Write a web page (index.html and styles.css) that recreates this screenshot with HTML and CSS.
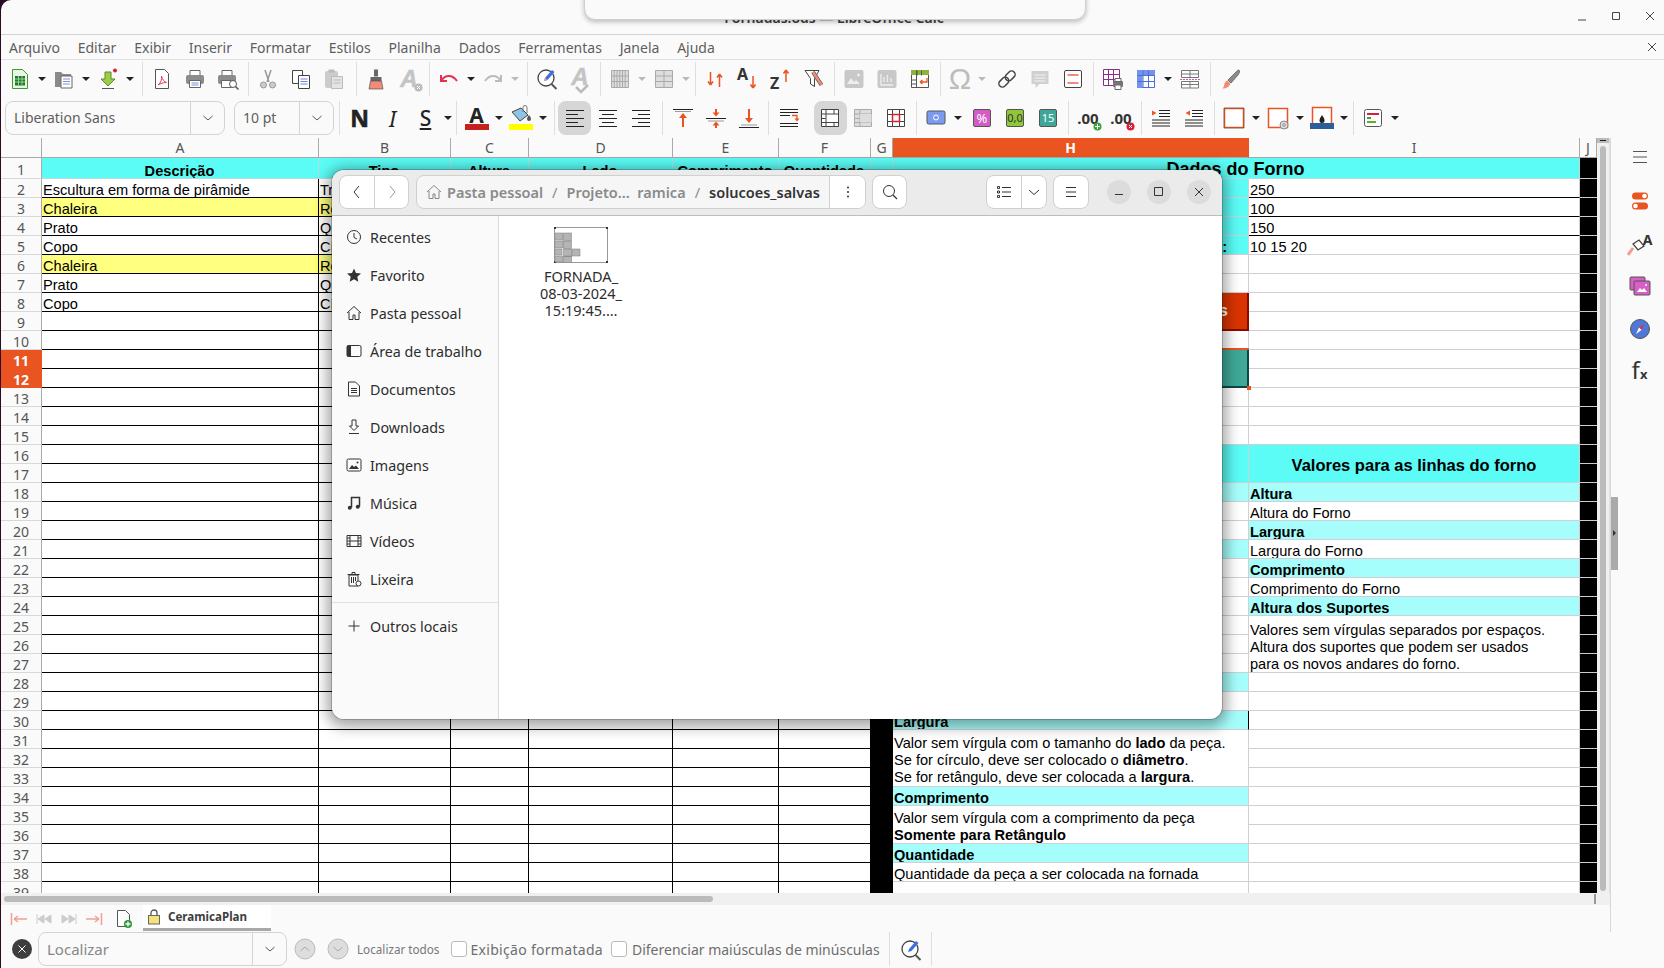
FILE: index.html
```html
<!DOCTYPE html>
<html>
<head>
    <title>Fornadas.ods - LibreOffice Calc</title>
    <meta name="viewport" content="width=device-width, initial-scale=1.0">
    <link rel="stylesheet" href="styles.css">
</head>
<body>
<div class="app">
    <div class="notice"><span>Aguarde enquanto o programa processa os dados do arquivo</span></div>

    <div class="titlebar">
        <span class="title">Fornadas.ods — LibreOffice Calc</span>
        <div class="wm">
            <svg width="14" height="14" viewBox="0 0 14 14"><path d="M3 11h8" stroke="#444" fill="none"/></svg>
            <svg width="14" height="14" viewBox="0 0 14 14"><path d="M3.500 3.500h7v7h-7z" stroke="#444" fill="none"/></svg>
            <svg width="14" height="14" viewBox="0 0 14 14"><path d="M3 3l8 8M11 3l-8 8" stroke="#444" fill="none"/></svg>
        </div>
    </div>

    <div class="menubar">
        <span>Arquivo</span><span>Editar</span><span>Exibir</span><span>Inserir</span><span>Formatar</span><span>Estilos</span><span>Planilha</span><span>Dados</span><span>Ferramentas</span><span>Janela</span><span>Ajuda</span>
        <svg class="menu-x" width="14" height="14" viewBox="0 0 14 14"><path d="M3 3l8 8M11 3l-8 8" stroke="#444" fill="none"/></svg>
    </div>

    <div class="toolbar tb1">
        <i class="ic"><svg width="24" height="24" viewBox="0 0 24 24"><path d="M4.500 2.500h10l5 5v14h-15z" fill="#eaf6e4" stroke="#3c9a30"/><path d="M7 9h10v9.500H7z" fill="#1d7d26"/><path d="M7 12h10M7 15h10M10.500 9v9M14 9v9" stroke="#cfe8c8" stroke-width=".7"/></svg></i>
        <i class="ar"></i>
        <i class="ic"><svg width="24" height="24" viewBox="0 0 24 24"><path d="M3 5h6l2 2h8v13H3z" fill="#8a8a8a"/><path d="M9 9h11v12H9z" fill="#fff" stroke="#666"/><path d="M11 12h7M11 14.500h7M11 17h7" stroke="#7f93d8"/></svg></i>
        <i class="ar"></i>
        <i class="ic"><svg width="24" height="24" viewBox="0 0 24 24"><path d="M9 5h6v7h4l-7 7-7-7h4z" fill="#9ccc4a" stroke="#5c8a24"/><path d="M6 21.500h12" stroke="#555"/><circle cx="19" cy="3.500" r="2" fill="#d0203a"/></svg></i>
        <i class="ar w"></i>
        <i class="sep"></i>
        <i class="ic"><svg width="24" height="24" viewBox="0 0 24 24"><path d="M5.500 2.500h9l4 4v15h-13z" fill="#fff" stroke="#555"/><path d="M8 18c3-2 4-6 3.500-9 1 4 3 6 5 6.500-3 0-6 1-8.500 2.500z" fill="none" stroke="#e2405a"/></svg></i>
        <i class="ic"><svg width="24" height="24" viewBox="0 0 24 24"><path d="M7 3.500h10v5H7z" fill="#fff" stroke="#666"/><rect x="3" y="8" width="18" height="9" rx="2" fill="#8c8c8c"/><path d="M6.500 13.500h11v7h-11z" fill="#fff" stroke="#666"/><path d="M8.500 16h7M8.500 18h7" stroke="#7f93d8"/></svg></i>
        <i class="ic"><svg width="24" height="24" viewBox="0 0 24 24"><path d="M6 3.500h10v5H6z" fill="#fff" stroke="#666"/><rect x="2" y="8" width="18" height="9" rx="2" fill="#8c8c8c"/><path d="M5.500 13.500h10v7h-10z" fill="#fff" stroke="#666"/><circle cx="17" cy="17" r="3.500" fill="#fff" stroke="#555"/><path d="M19.500 19.500l3 3" stroke="#555" stroke-width="1.500"/></svg></i>
        <i class="sep"></i>
        <i class="ic off"><svg width="24" height="24" viewBox="0 0 24 24"><path d="M9 3l4 12M15 3l-4 12" stroke="#999" stroke-width="1.500" fill="none"/><circle cx="7.500" cy="18" r="3" fill="#ccc" stroke="#999"/><circle cx="16.500" cy="18" r="3" fill="#ccc" stroke="#999"/></svg></i>
        <i class="ic"><svg width="24" height="24" viewBox="0 0 24 24"><path d="M3.500 3.500h10v13h-10z" fill="#fff" stroke="#444"/><path d="M9.500 8.500h11v13h-11z" fill="#fff" stroke="#444"/><path d="M11.500 12h7M11.500 14.500h7M11.500 17h7" stroke="#6d86d8"/></svg></i>
        <i class="ic off"><svg width="24" height="24" viewBox="0 0 24 24"><rect x="3" y="4" width="13" height="17" rx="2" fill="#ccc"/><path d="M6.500 2.500h6v3h-6z" fill="#bbb"/><path d="M9.500 9.500h11v12h-11z" fill="#e4e4e4" stroke="#bbb"/><path d="M11.500 13h7M11.500 16h7" stroke="#bbb"/></svg></i>
        <i class="sep m2"></i>
        <i class="ic"><svg width="24" height="24" viewBox="0 0 24 24"><path d="M10 2.500h4v7h-4z" fill="#666"/><path d="M6.500 10h11v4h-11z" fill="#666"/><path d="M6.500 14h11l1.500 8h-14z" fill="#f28b78" stroke="#555" stroke-width=".7"/></svg></i>
        <i class="ic off"><span class="gly-a">A</span><svg class="badge" width="9" height="9" viewBox="0 0 9 9"><circle cx="4.500" cy="4.500" r="4" fill="#bbb"/><path d="M3 3l3 3M6 3l-3 3" stroke="#fff"/></svg></i>
        <i class="sep"></i>
        <i class="ic"><svg width="24" height="24" viewBox="0 0 24 24"><path d="M4 8v6h6M4.500 13.500C8 8 15 7 20 14" fill="none" stroke="#e4304f" stroke-width="2"/></svg></i>
        <i class="ar"></i>
        <i class="ic off"><svg width="24" height="24" viewBox="0 0 24 24"><path d="M20 8v6h-6M19.500 13.500C16 8 9 7 4 14" fill="none" stroke="#bbb" stroke-width="2"/></svg></i>
        <i class="ar off w"></i>
        <i class="sep"></i>
        <i class="ic"><svg width="24" height="24" viewBox="0 0 24 24"><circle cx="11" cy="11" r="8" fill="#fff" stroke="#444" stroke-width="1.300"/><path d="M16.500 17l5 5" stroke="#555" stroke-width="2"/><path d="M9 14l1-3 7-8 2.500 2-7 8z" fill="#3d6fe0"/><path d="M9 14l1-3 2.500 2z" fill="#f0a070"/></svg></i>
        <i class="ic off"><span class="gly-a up">A</span><svg class="check" width="16" height="10" viewBox="0 0 16 10"><path d="M2 3l5 5 7-7" fill="none" stroke="#bbb" stroke-width="2.500"/></svg></i>
        <i class="sep"></i>
        <i class="ic"><svg width="24" height="24" viewBox="0 0 24 24"><path d="M3.500 3.500h17v17h-17zM3.500 9h17M3.500 14.500h17M9 3.500v17M14.500 3.500v17M6.200 3.500v17M11.800 3.500v17M17.200 3.500v17" fill="#ddd" stroke="#aaa"/></svg></i>
        <i class="ar off"></i>
        <i class="ic"><svg width="24" height="24" viewBox="0 0 24 24"><path d="M3.500 3.500h17v17h-17zM3.500 9h17M3.500 14.500h17M12 3.500v17" fill="#ddd" stroke="#aaa"/></svg></i>
        <i class="ar off"></i>
        <i class="sep"></i>
        <i class="ic"><svg width="24" height="24" viewBox="0 0 24 24"><path d="M7.500 5v13M7.500 18l-2.500-3.500M7.500 18l2.500-3.500M16.500 20V7M16.500 7l-2.500 3.500M16.500 7l2.500 3.500" fill="none" stroke="#e95420" stroke-width="1.500"/></svg></i>
        <i class="ic"><svg width="24" height="24" viewBox="0 0 24 24"><text x="1" y="13" class="st">A</text><path d="M17 9v12M17 21l-2.500-3.500M17 21l2.500-3.500" fill="none" stroke="#e95420" stroke-width="1.500"/></svg></i>
        <i class="ic"><svg width="24" height="24" viewBox="0 0 24 24"><text x="1" y="22" class="st">Z</text><path d="M17 15V3M17 3l-2.500 3.500M17 3l2.500 3.500" fill="none" stroke="#e95420" stroke-width="1.500"/></svg></i>
        <i class="ic"><svg width="24" height="24" viewBox="0 0 24 24"><path d="M3 3.500h14l-4.500 8v8l-4-2.500v-5.500z" fill="#fff" stroke="#444"/><path d="M11 5l8.500 13" stroke="#555" stroke-width="4"/><path d="M11 5l8.500 13" stroke="#f08c78" stroke-width="2.500"/></svg></i>
        <i class="sep"></i>
        <i class="ic"><svg width="24" height="24" viewBox="0 0 24 24"><rect x="2.500" y="3" width="19" height="18" rx="2" fill="#c8c8c8"/><path d="M5 17l4-6 3 4 2-2 4 4z" fill="#eee"/><circle cx="16.500" cy="8" r="1.500" fill="#eee"/></svg></i>
        <i class="ic"><svg width="24" height="24" viewBox="0 0 24 24"><rect x="2.500" y="3" width="19" height="18" rx="2" fill="#c8c8c8"/><path d="M6 7v11h12M9 15v-5M12.500 15v-7M16 15v-4" fill="none" stroke="#eee" stroke-width="1.300"/></svg></i>
        <i class="ic"><svg width="24" height="24" viewBox="0 0 24 24"><path d="M3.500 3.500h17v17h-17z" fill="#fff" stroke="#555"/><path d="M3 3h18v5H3z" fill="#8eb33b"/><path d="M8.500 3.500v17M3.500 13h5M3.500 17h5M9 3.500v5M13.500 3.500v5" stroke="#555" fill="none"/><path d="M19 11v4h-7M12 15l2.500-2M12 15l2.500 2" stroke="#e95420" stroke-width="1.300" fill="none"/></svg></i>
        <i class="sep"></i>
        <i class="ic off"><span class="gly-o">Ω</span></i>
        <i class="ar off w"></i>
        <i class="ic"><svg width="24" height="24" viewBox="0 0 24 24"><g transform="rotate(-45 12 12)" fill="none" stroke="#444" stroke-width="1.500"><rect x="2" y="8.500" width="11" height="7" rx="3.500"/><rect x="11" y="8.500" width="11" height="7" rx="3.500"/></g></svg></i>
        <i class="ic off"><svg width="24" height="24" viewBox="0 0 24 24"><path d="M3.500 4h17v13h-9l-4 4v-4h-4z" fill="#d0d0d0"/><path d="M6.500 8h11M6.500 11h11M6.500 14h11" stroke="#f5f5f5"/></svg></i>
        <i class="ic"><svg width="24" height="24" viewBox="0 0 24 24"><rect x="3.500" y="3.500" width="17" height="17" rx="1.500" fill="#fff" stroke="#444"/><path d="M6.500 8h11M6.500 16h11" stroke="#f08c78" stroke-width="2"/></svg></i>
        <i class="sep"></i>
        <i class="ic"><svg width="24" height="24" viewBox="0 0 24 24"><path d="M2.500 2.500h16v16h-16zM2.500 7.500h16M2.500 12.500h16M7.500 2.500v16M12.500 2.500v16" fill="#fff" stroke="#8c2d8c"/><rect x="12" y="14" width="10" height="6" rx="1" fill="#777"/><path d="M14 11.500h6v3h-6zM14 18h6v4.500h-6z" fill="#fff" stroke="#666"/></svg></i>
        <i class="ic"><svg width="24" height="24" viewBox="0 0 24 24"><path d="M3.500 3.500h17v17h-17z" fill="#fff" stroke="#4a6ee0"/><path d="M3 3h18v5.500H3zM3 3h5.500v18H3z" fill="#7592ea"/><path d="M3.500 8.500h17M3.500 14.500h17M9 3.500v17M14.500 3.500v17" stroke="#4a6ee0" fill="none"/></svg></i>
        <i class="ar"></i>
        <i class="ic"><svg width="24" height="24" viewBox="0 0 24 24"><path d="M3.500 3.500h17v7h-17zM3.500 7h17M12 3.500v7M3.500 14.500h17v6.500h-17zM3.500 17.500h17M12 14.500V21" fill="#fff" stroke="#777"/><path d="M2 12.500h20" stroke="#c45cb8" stroke-dasharray="2 1"/></svg></i>
        <i class="sep"></i>
        <i class="ic"><svg width="24" height="24" viewBox="0 0 24 24"><path d="M21 3c1 1 .5 3-1 5l-7 8-3-3 8-8c1-1 2-2.500 3-2z" fill="#8a8a8a" stroke="#777"/><path d="M9.500 13.500l3 3c-1 3-4 5-8 5 1.500-1.500 1.500-3 2-5 .5-1.500 2-3 3-3z" fill="#f08c78"/></svg></i>
    </div>

    <div class="toolbar tb2">
        <div class="combo font-box"><span class="combo-txt">Liberation Sans</span><span class="combo-btn"><svg width="12" height="12" viewBox="0 0 12 12"><path d="M1.500 4l4.500 4 4.500-4" fill="none" stroke="#555"/></svg></span></div>
        <div class="combo size-box"><span class="combo-txt">10 pt</span><span class="combo-btn"><svg width="12" height="12" viewBox="0 0 12 12"><path d="M1.500 4l4.500 4 4.500-4" fill="none" stroke="#555"/></svg></span></div>
        <i class="sep after-box"></i>
        <i class="ic"><span class="g-n">N</span></i>
        <i class="ic"><span class="g-i">I</span></i>
        <i class="ic"><span class="g-s">S</span></i>
        <i class="ar"></i>
        <i class="sep"></i>
        <i class="ic col"><span class="g-s plain">A</span><b class="swatch red"></b></i>
        <i class="ar"></i>
        <i class="ic col"><svg width="24" height="19" viewBox="0 0 24 19"><path d="M3 7l9-4 7 7-8 6z" fill="#8fc4e8" stroke="#444"/><path d="M14 7V2.500a2 2 0 0 1 4 0V8" fill="none" stroke="#777"/><path d="M20 10c1.500 2 2 3 2 4a2 2 0 0 1-4 0c0-1 .5-2 2-4z" fill="#555"/></svg><b class="swatch yellow"></b></i>
        <i class="ar"></i>
        <i class="sep m1"></i>
        <i class="ic act"><svg width="24" height="24" viewBox="0 0 24 24"><path d="M3 4.500h18M3 8.500h12M3 12.500h18M3 16.500h12M3 20.500h18" stroke="#222"/></svg></i>
        <i class="ic"><svg width="24" height="24" viewBox="0 0 24 24"><path d="M3 4.500h18M6 8.500h12M3 12.500h18M6 16.500h12M3 20.500h18" stroke="#222"/></svg></i>
        <i class="ic"><svg width="24" height="24" viewBox="0 0 24 24"><path d="M3 4.500h18M9 8.500h12M3 12.500h18M9 16.500h12M3 20.500h18" stroke="#222"/></svg></i>
        <i class="sep m2"></i>
        <i class="ic"><svg width="24" height="24" viewBox="0 0 24 24"><path d="M2 3.500h20" stroke="#222"/><path d="M12 21V10" stroke="#e95420" stroke-width="2"/><path d="M12 7l-4 5h8z" fill="#e95420"/><path d="M4 5.500h16" stroke="#999"/></svg></i>
        <i class="ic"><svg width="24" height="24" viewBox="0 0 24 24"><path d="M2 12.500h20" stroke="#222"/><path d="M4 15h16" stroke="#999"/><path d="M12 3v4" stroke="#e95420" stroke-width="2"/><path d="M12 10.500l-3.500-4h7z" fill="#e95420"/><path d="M12 22v-3" stroke="#e95420" stroke-width="2"/><path d="M12 15.500l-3.500 4h7z" fill="#e95420"/></svg></i>
        <i class="ic"><svg width="24" height="24" viewBox="0 0 24 24"><path d="M2 21.500h20" stroke="#222"/><path d="M4 19h16" stroke="#999"/><path d="M12 3v10" stroke="#e95420" stroke-width="2"/><path d="M12 17l-4-5h8z" fill="#e95420"/></svg></i>
        <i class="sep"></i>
        <i class="ic"><svg width="24" height="24" viewBox="0 0 24 24"><path d="M3 3.500h18M3 6.500h18M3 9.500h10M3 17.500h18M3 20.500h18" stroke="#222"/><path d="M15 9.500h5v4" fill="none" stroke="#e95420" stroke-width="1.300"/><path d="M17.500 12.500h5l-2.500 3z" fill="#e95420"/></svg></i>
        <i class="ic act sp9"><svg width="24" height="24" viewBox="0 0 24 24"><path d="M3.500 3.500h17v17h-17z" fill="#fff" stroke="#444"/><path d="M3.500 8h17M3.500 12.500h4M3.500 16.500h17M8 3.500v17M16 3.500v4.500M16 16.500v4" stroke="#444" fill="none"/></svg></i>
        <i class="ic off"><svg width="24" height="24" viewBox="0 0 24 24"><path d="M3.500 3.500h17v17h-17z" fill="#ddd" stroke="#aaa"/><path d="M3.500 8h17M3.500 12.500h17M3.500 16.500h17M9 3.500v17" stroke="#aaa" fill="none"/><path d="M9 8h11.500v8.500H9z" fill="#ddd"/></svg></i>
        <i class="ic"><svg width="24" height="24" viewBox="0 0 24 24"><path d="M3.500 3.500h17v17h-17z" fill="#fff" stroke="#444"/><path d="M3.500 8.500h17M3.500 15.500h17M8.500 3.500v17M15.500 3.500v17" stroke="#444" fill="none"/><path d="M8.500 8.500h7v7h-7z" fill="#fff" stroke="#d8203a" stroke-width="1.500"/></svg></i>
        <i class="sep"></i>
        <i class="ic"><svg width="24" height="24" viewBox="0 0 24 24"><rect x="3" y="5" width="18" height="13" rx="1.500" fill="#7a9bf0" stroke="#555"/><circle cx="12" cy="11.500" r="2.500" fill="none" stroke="#fff"/></svg></i>
        <i class="ar w2"></i>
        <i class="ic"><span class="tag pink">%</span></i>
        <i class="ic"><span class="tag green">0,0</span></i>
        <i class="ic"><span class="tag teal">15</span></i>
        <i class="sep"></i>
        <i class="ic"><span class="dec">.00</span><svg class="badge" width="9" height="9" viewBox="0 0 9 9"><circle cx="4.500" cy="4.500" r="4" fill="#3ca33c"/><path d="M4.500 2v5M2 4.500h5" stroke="#fff"/></svg></i>
        <i class="ic"><span class="dec">.00</span><svg class="badge" width="9" height="9" viewBox="0 0 9 9"><circle cx="4.500" cy="4.500" r="4" fill="#d8203a"/><path d="M3 3l3 3M6 3l-3 3" stroke="#fff"/></svg></i>
        <i class="sep"></i>
        <i class="ic"><svg width="24" height="24" viewBox="0 0 24 24"><path d="M10 4.500h11M10 7.500h11M10 10.500h11M3 14h18M3 17h18M3 20h18" stroke="#222"/><path d="M3 4.500v5l4.500-2.500z" fill="#e95420"/></svg></i>
        <i class="ic"><svg width="24" height="24" viewBox="0 0 24 24"><path d="M10 4.500h11M10 7.500h11M10 10.500h11M3 14h18M3 17h18M3 20h18" stroke="#222"/><path d="M8 4.500v5L3.500 7z" fill="#e95420"/></svg></i>
        <i class="sep"></i>
        <i class="ic"><svg width="24" height="24" viewBox="0 0 24 24"><path d="M2.500 2.500h19v19h-19z" fill="#fff" stroke="#e95420" stroke-width="1.500"/><path d="M2 2h20v20H2z" fill="none" stroke="#444" stroke-width=".5"/></svg></i>
        <i class="ar"></i>
        <i class="ic"><svg width="24" height="24" viewBox="0 0 24 24"><path d="M2.500 2.500h19v19h-19z" fill="#fff" stroke="#e95420" stroke-width="1.500"/><circle cx="18" cy="19" r="4" fill="#ddd" stroke="#888"/><circle cx="18" cy="19" r="1.300" fill="#fff" stroke="#888"/></svg></i>
        <i class="ar"></i>
        <i class="ic"><svg width="24" height="24" viewBox="0 0 24 24"><path d="M2.500 1.500h19v18h-19z" fill="#fff" stroke="#e95420" stroke-width="1.500"/><path d="M12 9c2 3 2.500 4 2.500 5.500a2.500 2.500 0 0 1-5 0C9.500 13 10 12 12 9z" fill="#222"/><path d="M0 17h24v6H0z" fill="#2b5f9b"/></svg></i>
        <i class="ar"></i>
        <i class="sep"></i>
        <i class="ic"><svg width="24" height="24" viewBox="0 0 24 24"><rect x="3.500" y="3.500" width="17" height="17" rx="2" fill="#fff" stroke="#555"/><path d="M6 8h12" stroke="#d8203a" stroke-width="2"/><path d="M6 12h4" stroke="#3ca33c" stroke-width="2"/><path d="M6 16h9" stroke="#5fb320" stroke-width="2"/></svg></i>
        <i class="ar"></i>
    </div>

    <div class="work">
        <div class="left">
            <div class="sheet-row">
                <div class="sheet">
                    <table class="grid">
                        <colgroup>
                            <col class="c-rh"><col class="c-a"><col class="c-b"><col class="c-c"><col class="c-d"><col class="c-e"><col class="c-f"><col class="c-g"><col class="c-h"><col class="c-i"><col class="c-j">
                        </colgroup>
                        <thead>
                            <tr class="colhead"><th></th><th>A</th><th>B</th><th>C</th><th>D</th><th>E</th><th>F</th><th>G</th><th class="sel">H</th><th>I</th><th>J</th></tr>
                        </thead>
                        <tbody>
                            <tr class="r1"><th>1</th><td class="hd">Descrição</td><td class="hd">Tipo</td><td class="hd">Altura</td><td class="hd">Lado</td><td class="hd">Comprimento</td><td class="hd">Quantidade</td><td class="hd"></td><td class="hd ttl" colspan="2">Dados do Forno</td><td class="j"></td></tr>
                            <tr><th>2</th><td>Escultura em forma de pirâmide</td><td>Triângulo</td><td>30</td><td>20</td><td></td><td>1</td><td class="bk"></td><td class="cy">Altura:</td><td class="i bb">250</td><td class="j"></td></tr>
                            <tr class="yel"><th>3</th><td>Chaleira</td><td>Retângulo</td><td>15</td><td>15</td><td>20</td><td>2</td><td class="bk"></td><td class="cy">Largura:</td><td class="i bb">100</td><td class="j"></td></tr>
                            <tr><th>4</th><td>Prato</td><td>Quadrado</td><td>5</td><td>10</td><td></td><td>4</td><td class="bk"></td><td class="cy">Comprimento:</td><td class="i bb">150</td><td class="j"></td></tr>
                            <tr><th>5</th><td>Copo</td><td>Círculo</td><td>10</td><td>8</td><td></td><td>6</td><td class="bk"></td><td class="cy lbl">Altura dos Suportes:</td><td class="i">10 15 20</td><td class="j"></td></tr>
                            <tr class="yel"><th>6</th><td>Chaleira</td><td>Retângulo</td><td>15</td><td>15</td><td>20</td><td>2</td><td class="bk"></td><td class="i"></td><td class="i"></td><td class="j"></td></tr>
                            <tr><th>7</th><td>Prato</td><td>Quadrado</td><td>5</td><td>10</td><td></td><td>4</td><td class="bk"></td><td class="i"></td><td class="i"></td><td class="j"></td></tr>
                            <tr><th>8</th><td>Copo</td><td>Círculo</td><td>10</td><td>8</td><td></td><td>6</td><td class="bk"></td><td class="btn-red" rowspan="2">Calcular Fornadas</td><td class="i"></td><td class="j"></td></tr>
                            <tr><th>9</th><td></td><td></td><td></td><td></td><td></td><td></td><td class="bk"></td><td class="i"></td><td class="j"></td></tr>
                            <tr><th>10</th><td></td><td></td><td></td><td></td><td></td><td></td><td class="bk"></td><td class="i"></td><td class="i"></td><td class="j"></td></tr>
                            <tr><th class="sel">11</th><td></td><td></td><td></td><td></td><td></td><td></td><td class="bk"></td><td class="btn-teal" rowspan="2"></td><td class="i"></td><td class="j"></td></tr>
                            <tr><th class="sel">12</th><td></td><td></td><td></td><td></td><td></td><td></td><td class="bk"></td><td class="i"></td><td class="j"></td></tr>
                            <tr><th>13</th><td></td><td></td><td></td><td></td><td></td><td></td><td class="bk"></td><td class="i"></td><td class="i"></td><td class="j"></td></tr>
                            <tr><th>14</th><td></td><td></td><td></td><td></td><td></td><td></td><td class="bk"></td><td class="i"></td><td class="i"></td><td class="j"></td></tr>
                            <tr><th>15</th><td></td><td></td><td></td><td></td><td></td><td></td><td class="bk"></td><td class="i"></td><td class="i"></td><td class="j"></td></tr>
                            <tr><th>16</th><td></td><td></td><td></td><td></td><td></td><td></td><td class="bk"></td><td class="cy" rowspan="2"></td><td class="cy big" rowspan="2">Valores para as linhas do forno</td><td class="j"></td></tr>
                            <tr><th>17</th><td></td><td></td><td></td><td></td><td></td><td></td><td class="bk"></td><td class="j"></td></tr>
                            <tr><th>18</th><td></td><td></td><td></td><td></td><td></td><td></td><td class="bk"></td><td class="lc"></td><td class="lc">Altura</td><td class="j"></td></tr>
                            <tr><th>19</th><td></td><td></td><td></td><td></td><td></td><td></td><td class="bk"></td><td class="i"></td><td class="i">Altura do Forno</td><td class="j"></td></tr>
                            <tr><th>20</th><td></td><td></td><td></td><td></td><td></td><td></td><td class="bk"></td><td class="i"></td><td class="lc">Largura</td><td class="j"></td></tr>
                            <tr><th>21</th><td></td><td></td><td></td><td></td><td></td><td></td><td class="bk"></td><td class="lc"></td><td class="i">Largura do Forno</td><td class="j"></td></tr>
                            <tr><th>22</th><td></td><td></td><td></td><td></td><td></td><td></td><td class="bk"></td><td class="i"></td><td class="lc">Comprimento</td><td class="j"></td></tr>
                            <tr><th>23</th><td></td><td></td><td></td><td></td><td></td><td></td><td class="bk"></td><td class="i"></td><td class="i">Comprimento do Forno</td><td class="j"></td></tr>
                            <tr><th>24</th><td></td><td></td><td></td><td></td><td></td><td></td><td class="bk"></td><td class="i"></td><td class="lc">Altura dos Suportes</td><td class="j"></td></tr>
                            <tr><th>25</th><td></td><td></td><td></td><td></td><td></td><td></td><td class="bk"></td><td class="i"></td><td class="i ml tight" rowspan="3">Valores sem vírgulas separados por espaços.<br>Altura dos suportes que podem ser usados<br>para os novos andares do forno.</td><td class="j"></td></tr>
                            <tr><th>26</th><td></td><td></td><td></td><td></td><td></td><td></td><td class="bk"></td><td class="i"></td><td class="j"></td></tr>
                            <tr><th>27</th><td></td><td></td><td></td><td></td><td></td><td></td><td class="bk"></td><td class="i"></td><td class="j"></td></tr>
                            <tr><th>28</th><td></td><td></td><td></td><td></td><td></td><td></td><td class="bk"></td><td class="lc"></td><td class="i"></td><td class="j"></td></tr>
                            <tr><th>29</th><td></td><td></td><td></td><td></td><td></td><td></td><td class="bk"></td><td class="i"></td><td class="i"></td><td class="j"></td></tr>
                            <tr><th>30</th><td></td><td></td><td></td><td></td><td></td><td></td><td class="bk"></td><td class="lc rb">Largura</td><td class="i"></td><td class="j"></td></tr>
                            <tr><th>31</th><td></td><td></td><td></td><td></td><td></td><td></td><td class="bk"></td><td class="i ml" rowspan="3">Valor sem vírgula com o tamanho do <b>lado</b> da peça.<br>Se for círculo, deve ser colocado o <b>diâmetro</b>.<br>Se for retângulo, deve ser colocada a <b>largura</b>.</td><td class="i"></td><td class="j"></td></tr>
                            <tr><th>32</th><td></td><td></td><td></td><td></td><td></td><td></td><td class="bk"></td><td class="i"></td><td class="j"></td></tr>
                            <tr><th>33</th><td></td><td></td><td></td><td></td><td></td><td></td><td class="bk"></td><td class="i"></td><td class="j"></td></tr>
                            <tr><th>34</th><td></td><td></td><td></td><td></td><td></td><td></td><td class="bk"></td><td class="lc">Comprimento</td><td class="i"></td><td class="j"></td></tr>
                            <tr><th>35</th><td></td><td></td><td></td><td></td><td></td><td></td><td class="bk"></td><td class="i ml tight two" rowspan="2">Valor sem vírgula com a comprimento da peça<br><b>Somente para Retângulo</b></td><td class="i"></td><td class="j"></td></tr>
                            <tr><th>36</th><td></td><td></td><td></td><td></td><td></td><td></td><td class="bk"></td><td class="i"></td><td class="j"></td></tr>
                            <tr><th>37</th><td></td><td></td><td></td><td></td><td></td><td></td><td class="bk"></td><td class="lc">Quantidade</td><td class="i"></td><td class="j"></td></tr>
                            <tr><th>38</th><td></td><td></td><td></td><td></td><td></td><td></td><td class="bk"></td><td class="i">Quantidade da peça a ser colocada na fornada</td><td class="i"></td><td class="j"></td></tr>
                            <tr><th>39</th><td></td><td></td><td></td><td></td><td></td><td></td><td class="bk"></td><td class="i"></td><td class="i"></td><td class="j"></td></tr>
                        </tbody>
                    </table>
                </div>
                <div class="vscroll"><div class="v-btn"></div><div class="v-thumb"></div></div>
            </div>
            <div class="hscroll"><div class="h-thumb"></div></div>
            <div class="tabbar">
                <svg class="t-nav" width="18" height="14" viewBox="0 0 18 14"><path d="M1.500 1v12M4 7h13M4 7l4-3M4 7l4 3" fill="none" stroke="#f0a090" stroke-width="1.500"/></svg>
                <svg class="t-nav" width="18" height="14" viewBox="0 0 18 14"><path d="M2 2v10M9 3L3 7l6 4zM16 3l-6 4 6 4z" fill="#ccc" stroke="#ccc"/></svg>
                <svg class="t-nav" width="18" height="14" viewBox="0 0 18 14"><path d="M16 2v10M9 3l6 4-6 4zM2 3l6 4-6 4z" fill="#ccc" stroke="#ccc"/></svg>
                <svg class="t-nav" width="18" height="14" viewBox="0 0 18 14"><path d="M16.500 1v12M14 7H1M14 7l-4-3M14 7l-4 3" fill="none" stroke="#f0a090" stroke-width="1.500"/></svg>
                <svg class="t-new" width="18" height="20" viewBox="0 0 18 20"><path d="M2.500 1.500h8l4 4v12h-12z" fill="#fff" stroke="#555"/><circle cx="13" cy="15" r="4" fill="#2c9a3c"/><path d="M13 12.500v5M10.500 15h5" stroke="#fff" stroke-width="1.300"/></svg>
                <div class="tab">
                    <svg width="14" height="16" viewBox="0 0 14 16"><path d="M4 7V4a3 3 0 0 1 6 0v3" fill="none" stroke="#555" stroke-width="1.300"/><rect x="1.500" y="6.500" width="11" height="8.500" fill="#f5e27a" stroke="#666"/></svg>
                    <span>CeramicaPlan</span>
                </div>
            </div>
        </div>
        <div class="sidebar">
            <div class="handle"></div>
            <svg width="20" height="20" viewBox="0 0 20 20"><path d="M3 4.500h14M3 10h14M3 15.500h14" stroke="#555"/></svg>
            <svg class="s-tog" width="20" height="20" viewBox="0 0 20 20"><rect x="2" y="1.500" width="16" height="7" rx="3.500" fill="#e95420"/><circle cx="14.500" cy="5" r="2.300" fill="#fff"/><rect x="2" y="11.500" width="16" height="7" rx="3.500" fill="#e95420"/><circle cx="5.500" cy="15" r="2.300" fill="#fff"/></svg>
            <span class="side-style"><svg width="24" height="24" viewBox="0 0 24 24"><path d="M6 11l6-4 5 6-6 4z" fill="#fff" stroke="#444" stroke-width="1.300"/><path d="M6 15L1 22" stroke="#f49a90" stroke-width="3"/></svg><b>A</b></span>
            <svg class="s-gal" width="22" height="20" viewBox="0 0 22 20"><rect x="1" y="1" width="15" height="13" rx="1" fill="#d75fc5" stroke="#555"/><rect x="5" y="5" width="16" height="14" rx="1" fill="#d75fc5" stroke="#555"/><path d="M8 16l3-4 2 2 2-2 3 4z" fill="#fff"/><circle cx="17" cy="9" r="1" fill="#fff"/></svg>
            <svg class="s-nav" width="22" height="22" viewBox="0 0 22 22"><circle cx="11" cy="11" r="9.500" fill="#4f77d8" stroke="#555"/><path d="M15 6l-5 3.500 2.500 2.500z" fill="#e0304a"/><path d="M7 16l3-6.500 2.500 2.500z" fill="#fff"/></svg>
            <span class="side-fx">f<small>x</small></span>
        </div>
    </div>

    <div class="findbar">
        <svg class="find-x" width="20" height="20" viewBox="0 0 20 20"><circle cx="10" cy="10" r="10" fill="#3d3d3d"/><path d="M6.500 6.500l7 7M13.500 6.500l-7 7" stroke="#fff"/></svg>
        <div class="combo find-box"><span class="combo-txt">Localizar</span><span class="combo-btn"><svg width="12" height="12" viewBox="0 0 12 12"><path d="M1.500 4l4.500 4 4.500-4" fill="none" stroke="#555"/></svg></span></div>
        <svg class="round" width="22" height="22" viewBox="0 0 22 22"><circle cx="11" cy="11" r="10" fill="#ddd" stroke="#bbb"/><path d="M6.500 13l4.500-4 4.500 4" fill="none" stroke="#aaa"/></svg>
        <svg class="round" width="22" height="22" viewBox="0 0 22 22"><circle cx="11" cy="11" r="10" fill="#ddd" stroke="#bbb"/><path d="M6.500 9l4.500 4 4.500-4" fill="none" stroke="#aaa"/></svg>
        <span class="find-all">Localizar todos</span>
        <span class="chk"></span><span class="find-lbl wide">Exibição formatada</span>
        <span class="chk second"></span><span class="find-lbl">Diferenciar maiúsculas de minúsculas</span>
        <i class="find-sep"></i>
        <svg class="find-ic" width="24" height="24" viewBox="0 0 24 24"><circle cx="11" cy="12" r="8" fill="#fff" stroke="#444" stroke-width="1.300"/><path d="M16.500 18l5 5" stroke="#555" stroke-width="2"/><path d="M9 15l1-3 7-8 2.500 2-7 8z" fill="#3d6fe0"/></svg>
        <i class="find-sep end"></i>
    </div>

    <div class="chooser">
        <div class="ch-head">
            <div class="ch-group nav">
                <span class="ch-btn"><svg width="16" height="16" viewBox="0 0 16 16"><path d="M10 2L5 8l5 6" fill="none" stroke="#333"/></svg></span>
                <span class="ch-btn"><svg width="16" height="16" viewBox="0 0 16 16"><path d="M6 2l5 6-5 6" fill="none" stroke="#999"/></svg></span>
            </div>
            <div class="ch-group path">
                <span class="crumbs">
                    <svg width="16" height="16" viewBox="0 0 16 16"><path d="M1 8l7-6.500L15 8M3 7v7.500h4V10h2v4.500h4V7" fill="none" stroke="#888"/></svg>
                    <b class="dim">Pasta pessoal</b><em>/</em><b class="dim">Projeto…&nbsp;&nbsp;ramica</b><em>/</em><b>solucoes_salvas</b>
                </span>
                <span class="ch-btn more"><svg width="4" height="14" viewBox="0 0 4 14"><circle cx="2" cy="2.500" r="1" fill="#333"/><circle cx="2" cy="7" r="1" fill="#333"/><circle cx="2" cy="11.500" r="1" fill="#333"/></svg></span>
            </div>
            <div class="ch-group search">
                <span class="ch-btn"><svg width="16" height="16" viewBox="0 0 16 16"><circle cx="7" cy="7" r="5.500" fill="none" stroke="#333"/><path d="M11 11l4 4" stroke="#333" stroke-width="1.300"/></svg></span>
            </div>
            <div class="ch-spacer"></div>
            <div class="ch-group view">
                <span class="ch-btn"><svg width="14" height="14" viewBox="0 0 14 14"><path d="M.5 1.500h2v2h-2zM.5 6h2v2h-2zM.5 10.500h2v2h-2z" fill="none" stroke="#333"/><path d="M5 2.500h9M5 7h9M5 11.500h9" stroke="#333"/></svg></span>
                <span class="ch-btn"><svg width="12" height="12" viewBox="0 0 12 12"><path d="M1 4l5 4.500L11 4" fill="none" stroke="#333"/></svg></span>
            </div>
            <div class="ch-group menu">
                <span class="ch-btn"><svg width="14" height="14" viewBox="0 0 14 14"><path d="M2 2.500h10M2 7h10M2 11.500h10" stroke="#333"/></svg></span>
            </div>
            <div class="ch-wm"><svg width="12" height="12" viewBox="0 0 12 12"><path d="M2 8.500h8" stroke="#333"/></svg></div>
            <div class="ch-wm"><svg width="12" height="12" viewBox="0 0 12 12"><path d="M1.500 1.500h8v8h-8z" fill="none" stroke="#333"/></svg></div>
            <div class="ch-wm"><svg width="12" height="12" viewBox="0 0 12 12"><path d="M2 2l8 8M10 2l-8 8" stroke="#333"/></svg></div>
        </div>
        <div class="ch-body">
            <div class="places">
                <div class="place"><svg width="16" height="16" viewBox="0 0 16 16"><circle cx="8" cy="8" r="6.500" fill="none" stroke="#333"/><path d="M8 4v4.500l3 1.500" fill="none" stroke="#333"/></svg><span>Recentes</span></div>
                <div class="place"><svg width="16" height="16" viewBox="0 0 16 16"><path d="M8 1.500l2 4.500 5 .5-3.700 3.300 1 5L8 12.200 3.700 14.800l1-5L1 6.500 6 6z" fill="#333"/></svg><span>Favorito</span></div>
                <div class="place"><svg width="16" height="16" viewBox="0 0 16 16"><path d="M1 8l7-6.500L15 8M3 7v7.500h4V10h2v4.500h4V7" fill="none" stroke="#333"/></svg><span>Pasta pessoal</span></div>
                <div class="place"><svg width="16" height="16" viewBox="0 0 16 16"><rect x="1" y="2.500" width="14" height="11" rx="1.500" fill="none" stroke="#333"/><path d="M1 2.500h4v11H1z" fill="#333"/></svg><span>Área de trabalho</span></div>
                <div class="place"><svg width="16" height="16" viewBox="0 0 16 16"><path d="M2.500 1h7l4 4v10h-11z" fill="none" stroke="#333"/><path d="M5 7.500h6M5 9.500h6M5 11.500h6" stroke="#333"/></svg><span>Documentos</span></div>
                <div class="place"><svg width="16" height="16" viewBox="0 0 16 16"><path d="M6 1h4v6h2.500L8 11.500 3.500 7H6zM3 14.500h10" fill="none" stroke="#333"/></svg><span>Downloads</span></div>
                <div class="place"><svg width="16" height="16" viewBox="0 0 16 16"><rect x="1" y="2" width="14" height="12" rx="1.500" fill="none" stroke="#333"/><path d="M3 12l3-4 2 2 2-1.500 3 3.500z" fill="#333"/><circle cx="11.500" cy="5.500" r="1" fill="#333"/></svg><span>Imagens</span></div>
                <div class="place"><svg width="16" height="16" viewBox="0 0 16 16"><path d="M5.500 12.500V2.500h8v9" fill="none" stroke="#333" stroke-width="1.500"/><circle cx="3.800" cy="12.800" r="2" fill="#333"/><circle cx="11.800" cy="11.800" r="2" fill="#333"/></svg><span>Música</span></div>
                <div class="place"><svg width="16" height="16" viewBox="0 0 16 16"><path d="M1 2.500h14v11H1zM4 2.500v11M12 2.500v11M4 8h8M1 5h3M1 8h3M1 11h3M12 5h3M12 8h3M12 11h3" fill="none" stroke="#333"/></svg><span>Vídeos</span></div>
                <div class="place"><svg width="16" height="16" viewBox="0 0 16 16"><path d="M3 4h9v11H3zM1.500 3.500h12M6 1.500h3v2H6zM5.500 6v6M7.500 6v6M9.500 6v4" fill="none" stroke="#333"/><circle cx="12.500" cy="12.500" r="2.500" fill="#fafafa" stroke="#333"/></svg><span>Lixeira</span></div>
                <div class="place-sep"></div>
                <div class="place other"><svg width="16" height="16" viewBox="0 0 16 16"><path d="M8 2.500v11M2.500 8h11" stroke="#333"/></svg><span>Outros locais</span></div>
            </div>
            <div class="files">
                <div class="file">
                    <svg class="thumb" width="56" height="38" viewBox="0 0 56 38">
                        <path d="M1.500 1.500h53v35h-53z" fill="#fff" stroke="#999"/>
                        <path d="M1 1h2v2H1zM53 1h2v2h-2zM1 35h2v2H1zM53 35h2v2h-2z" fill="#333"/>
                        <path d="M2 7h8v7H2zM10.500 7h8v8h-8zM2 15h8v7H2zM10.500 15.500h8v7h-8zM10.500 23h8v7h-8zM19 23h8v7h-8zM2 23h7v6H2zM2 30h8v6H2zM10.500 30.500h8v6h-8zM19 30.500h-8z" fill="#b4b4b4" stroke="#8a8a8a" stroke-width=".6"/>
                    </svg>
                    <div class="file-name">FORNADA_<br>08-03-2024_<br>15:19:45.…</div>
                </div>
            </div>
        </div>
    </div>
</div>
</body>
</html>
```
FILE: styles.css
```css
* {
    box-sizing: border-box;
}

body {
    margin: 0;
    background-color: #2c0a24;
    font-family: "Noto Sans", sans-serif;
    overflow: hidden;
}

i {
    font-style: normal;
}

.app {
    position: relative;
    width: 1663px;
    height: 968px;
    margin-left: 1px;
    background-color: #fafafa;
    display: flex;
    flex-direction: column;
    overflow: hidden;
    border-top-left-radius: 10px;
}

/* window title */
.titlebar {
    height: 35px;
    flex: none;
    display: flex;
    align-items: center;
    justify-content: center;
    border-bottom: 1px solid #d4d4d4;
}

.title {
    font-size: 14px;
    font-weight: 600;
    color: #3d3d3d;
    margin-left: 3px;
}

.wm {
    position: absolute;
    right: 7px;
    top: 9px;
    display: flex;
    gap: 20px;
}

.notice {
    position: absolute;
    left: 583px;
    top: -12px;
    width: 502px;
    height: 32px;
    background-color: #fafafa;
    border: 1px solid #d0d0d0;
    border-radius: 11px;
    box-shadow: 0 2px 5px rgba(0, 0, 0, .25);
    text-align: center;
    font-size: 14px;
    line-height: 0;
    z-index: 2;
    overflow: hidden;
    color: #333;
}

/* menu */
.menubar {
    height: 25px;
    flex: none;
    display: flex;
    align-items: center;
    gap: 17.800px;
    padding-left: 8px;
    font-size: 14px;
    color: #5e5e5e;
    border-bottom: 1px solid #e0e0e0;
}

.menu-x {
    position: absolute;
    right: 5px;
    top: 40px;
}

/* toolbars */
.toolbar {
    flex: none;
    display: flex;
    align-items: center;
    height: 39px;
}

.tb1 {
    padding: 0 0 1px 2.500px;
}

.tb2 {
    padding: 0 0 2px 4px;
}

.ic {
    position: relative;
    flex: none;
    width: 33px;
    height: 34px;
    display: flex;
    align-items: center;
    justify-content: center;
}

.ic.col {
    flex-direction: column;
    gap: 0;
}

.ic.act {
    background-color: #d6d6d6;
    border-radius: 8px;
}

.sp9 {
    margin-left: 8.500px;
}

.ar {
    flex: none;
    width: 11px;
    display: flex;
    justify-content: center;
}

.ar::after {
    content: "";
    border: 4px solid transparent;
    border-top: 4.500px solid #222;
    border-bottom: 0;
}

.ar.off::after {
    border-top-color: #bbb;
}

.ar.w {
    margin-right: 3px;
}

.ar.w2 {
    margin-right: 2px;
}

.sep {
    flex: none;
    width: 1px;
    height: 34px;
    margin: 0 3px;
    background-color: #dedede;
}

.sep.m1 {
    margin-left: 6px;
}

.sep.m2 {
    margin-left: 5px;
}

.sep.after-box {
    margin: 0 3.500px 0 4.500px;
}

.gly-a {
    font: italic bold 24px "Liberation Sans", sans-serif;
    color: #c4c4c4;
    -webkit-text-stroke: .5px #c4c4c4;
}

.gly-a.up {
    margin-bottom: 5px;
}

.gly-o {
    font: 30px "Liberation Sans", sans-serif;
    color: #bdbdbd;
}

.badge {
    position: absolute;
    right: 3px;
    bottom: 4px;
}

.check {
    position: absolute;
    right: 7px;
    bottom: 2px;
}

.st {
    font: bold 16px "Noto Sans", sans-serif;
    fill: #333;
}

.g-n {
    font: bold 23px "Noto Sans", sans-serif;
    color: #222;
    -webkit-text-stroke: .6px #222;
}

.g-i {
    font: italic 22px "Noto Sans", sans-serif;
    color: #222;
}

.g-s {
    font: 500 21px/20px "Noto Sans", sans-serif;
    color: #222;
    text-decoration: underline;
}

.g-s.plain {
    font-weight: 700;
    text-decoration: none;
    height: 19px;
}

.swatch {
    display: block;
    width: 24px;
    height: 6px;
}

.red {
    background-color: #c4201c;
}

.yellow {
    background-color: #ffff00;
}

.tag {
    width: 18px;
    height: 18px;
    border: 1px solid #555;
    border-radius: 2px;
    font-size: 11px;
    line-height: 16px;
    text-align: center;
    color: #fff;
}

.pink {
    background-color: #d45cc4;
    font-size: 13px;
}

.green {
    background-color: #8fc63a;
    color: #333;
}

.teal {
    background-color: #3fa79a;
}

.dec {
    font: bold 15px "Noto Sans", sans-serif;
    color: #333;
}

.combo {
    flex: none;
    display: flex;
    align-items: center;
    height: 34px;
    background-color: #fafafa;
    border: 1px solid #d4d4d4;
    border-radius: 8px;
    font-size: 14px;
    color: #5e5e5e;
}

.combo-txt {
    flex: 1;
    padding-left: 8px;
}

.combo-btn {
    flex: none;
    width: 34px;
    height: 100%;
    display: flex;
    align-items: center;
    justify-content: center;
    border-left: 1px solid #d4d4d4;
}

.font-box {
    width: 220px;
}

.size-box {
    width: 100px;
    margin-left: 9px;
}

/* work area */
.work {
    height: 794px;
    flex: none;
    display: flex;
}

.left {
    width: 1609px;
    flex: none;
    display: flex;
    flex-direction: column;
}

.sheet-row {
    height: 755px;
    flex: none;
    display: flex;
}

.sheet {
    width: 1596px;
    flex: none;
    overflow: hidden;
    background-color: #fff;
}

.grid {
    width: 1596px;
    table-layout: fixed;
    border-collapse: separate;
    border-spacing: 0;
    font: 14.600px/14px "Liberation Sans", sans-serif;
    color: #000;
}

.c-rh { width: 41px; }
.c-a { width: 277px; }
.c-b { width: 132px; }
.c-c { width: 78px; }
.c-d { width: 144px; }
.c-e { width: 106px; }
.c-f { width: 92px; }
.c-g { width: 22px; }
.c-h { width: 356px; }
.c-i { width: 331px; }
.c-j { width: 17px; }

.grid th {
    padding: 3px 0 0;
    font: 14px/14px "Noto Sans", sans-serif;
    color: #555;
    background-color: #fafafa;
    border-right: 1px solid #aaa;
    border-bottom: 1px solid #d8d8d8;
    overflow: hidden;
}

.grid tr {
    height: 19px;
}

.grid td {
    height: 19px;
    padding: 4px 2px 0 1px;
    vertical-align: bottom;
    white-space: nowrap;
    overflow: hidden;
    border-right: 1px solid #000;
    border-bottom: 1px solid #000;
}

.grid .colhead {
    height: 20px;
}

.grid .colhead th {
    padding: 0;
    line-height: 17px;
    border-bottom: 1px solid #a8a8a8;
}

.grid .sel {
    background-color: #e95420;
    color: #fff;
    font-weight: 700;
    border-color: #e95420;
}

.grid .r1 {
    height: 21px;
}

.grid .hd {
    height: 21px;
    padding-top: 5px;
    background-color: #5bfcf6;
    font-weight: 700;
    text-align: center;
    border-color: #b8dcdc;
}

.grid .ttl {
    padding-top: 2px;
    font-size: 18px;
    line-height: 18px;
}

.grid .yel td:not(.bk, .cy, .i, .j) {
    background-color: #ffff80;
}

.grid .bk {
    background-color: #000;
}

.grid .j {
    background-color: #000;
    border-right: 0;
    border-bottom: 1px solid #ccc;
}

.grid .i,
.grid .cy,
.grid .lc {
    border-color: #cfcfd6;
}

.grid .bb {
    border-bottom-color: #000;
}

.grid .cy {
    background-color: #5bfcf6;
}

.grid .lbl {
    text-align: right;
    padding-right: 21px;
    font-weight: 700;
}

.grid .lc {
    background-color: #a6fefc;
    font-weight: 700;
}

.grid .rb {
    border-right-color: #000;
}

.grid .ml {
    padding-top: 0;
    line-height: 17px;
}

.grid .tight {
    padding-top: 6px;
    vertical-align: top;
    border-bottom: 0;
    box-shadow: inset 0 -1px 0 #cfcfd6;
}

.grid .tight.two {
    padding-top: 4px;
}

.grid .big {
    padding: 2px 0 0;
    font-size: 16.500px;
    font-weight: 700;
    text-align: center;
    vertical-align: middle;
}

.grid .btn-red {
    padding: 0 19px 0 0;
    background-color: #d93400;
    color: #fff;
    font-weight: 700;
    font-size: 17px;
    text-align: right;
    vertical-align: middle;
    border-right: 2px solid #8a0a00;
    border-bottom: 2px solid #8a0a00;
}

.grid .btn-teal {
    position: relative;
    background-color: #40a898;
    border-right: 2px solid #0b4a44;
    border-bottom: 2px solid #0b4a44;
    overflow: visible;
    box-shadow: 0 -2px 0 #e95420;
}

.btn-teal::after {
    content: "";
    position: absolute;
    right: -4px;
    bottom: -4px;
    width: 4px;
    height: 4px;
    background-color: #e95420;
}

.vscroll {
    width: 13px;
    flex: none;
    background-color: #f0f0f0;
    border-right: 1px solid #e0e0e0;
}

.v-btn {
    height: 5px;
    margin-bottom: 3px;
    background-color: #bbb;
    position: relative;
}

.v-btn::after {
    content: "";
    position: absolute;
    left: 3px;
    top: 2px;
    width: 6px;
    height: 1px;
    background-color: #222;
}

.v-thumb {
    width: 6px;
    height: 745px;
    margin-left: 3px;
    border-radius: 3px;
    background-color: #bbb;
}

.hscroll {
    position: relative;
    height: 12px;
    flex: none;
    padding-top: 3px;
    background-color: #f0f0f0;
}

.hscroll::after {
    content: "";
    position: absolute;
    left: 1593px;
    top: 1px;
    width: 2px;
    height: 10px;
    background-color: #999;
}

.h-thumb {
    width: 709px;
    height: 6px;
    margin-left: 3px;
    border-radius: 3px;
    background-color: #bbb;
}

.tabbar {
    height: 27px;
    flex: none;
    display: flex;
    align-items: flex-start;
    padding-left: 9px;
}

.t-nav {
    margin: 7px 7px 0 0;
}

.t-new {
    margin: 4px 0 0 5px;
}

.tab {
    width: 128px;
    height: 26px;
    margin-left: 10px;
    display: flex;
    align-items: center;
    gap: 7px;
    padding: 0 0 0 4px;
    background-color: #fff;
    border-bottom: 3px solid #a8a8a8;
    font-size: 11.600px;
    font-weight: 700;
    color: #3d3d3d;
}

/* right deck */
.sidebar {
    position: relative;
    width: 54px;
    flex: none;
    display: flex;
    flex-direction: column;
    align-items: center;
    padding: 9px 0 0 4px;
    border-left: 1px solid #d8d8d8;
}

.handle {
    position: absolute;
    left: 0;
    top: 359px;
    width: 7px;
    height: 73px;
    background-color: #aaa;
}

.handle::after {
    content: "";
    position: absolute;
    left: 2px;
    top: 33px;
    border: 3px solid transparent;
    border-left: 3px solid #333;
    border-right: 0;
}

.s-tog {
    margin-top: 24px;
}

.side-style {
    position: relative;
    width: 26px;
    height: 24px;
    margin-top: 22px;
}

.side-style b {
    position: absolute;
    right: 0;
    top: -3px;
    font: bold 14px "Noto Sans", sans-serif;
    color: #333;
}

.s-gal {
    margin-top: 19px;
}

.s-nav {
    margin-top: 22px;
}

.side-fx {
    margin-top: 18px;
    font: 24px/24px "Noto Sans", sans-serif;
    color: #333;
}

.side-fx small {
    font-size: 13px;
    font-weight: 700;
}

/* search bar */
.findbar {
    position: relative;
    flex: 1;
    display: flex;
    align-items: center;
    padding: 0 0 6px 11px;
    font-size: 14px;
    color: #6e6e6e;
}

.find-box {
    width: 249px;
    margin-left: 6px;
}

.find-box .combo-txt {
    color: #888;
    font-size: 15px;
}

.round {
    margin-left: 7px;
}

.round + .round {
    margin-left: 11px;
}

.find-all {
    margin-left: 8px;
    font-size: 11.700px;
    color: #777;
}

.chk {
    width: 16px;
    height: 16px;
    margin: 0 3px 0 12px;
    background-color: #fff;
    border: 1px solid #bbb;
    border-radius: 3px;
}

.find-lbl.wide {
    letter-spacing: .3px;
}

.chk.second {
    margin: 0 5px 0 8px;
}

.find-sep {
    width: 1px;
    height: 34px;
    margin-left: 9px;
    background-color: #dedede;
}

.find-ic {
    margin-left: 9px;
}

.find-sep.end {
    margin-left: 8px;
}

/* file chooser window */
.chooser {
    position: absolute;
    left: 331px;
    top: 170px;
    width: 890px;
    height: 549px;
    display: flex;
    flex-direction: column;
    background-color: #fff;
    border-radius: 12px;
    overflow: hidden;
    box-shadow: 0 0 0 1px rgba(0, 0, 0, .2), 0 3px 14px 5px rgba(0, 0, 0, .35);
    z-index: 3;
    font-size: 14.300px;
}

.ch-head {
    height: 46px;
    flex: none;
    display: flex;
    align-items: center;
    padding: 0 11px 1px 7px;
    background-color: #ebebeb;
    border-bottom: 1px solid #bdbdbd;
}

.ch-group {
    flex: none;
    display: flex;
    height: 34px;
    background-color: #fff;
    border: 1px solid #d0d0d0;
    border-radius: 8px;
    overflow: hidden;
}

.ch-btn {
    flex: none;
    display: flex;
    align-items: center;
    justify-content: center;
    height: 100%;
}

.nav .ch-btn {
    width: 34px;
}

.nav .ch-btn + .ch-btn {
    border-left: 1px solid #d0d0d0;
}

.path {
    width: 450px;
    margin-left: 7px;
    background-color: #f6f6f6;
}

.crumbs {
    flex: 1;
    display: flex;
    align-items: center;
    gap: 9px;
    padding-left: 9px;
    font-size: 14.500px;
    color: #333;
    white-space: nowrap;
}

.crumbs b {
    font-weight: 600;
}

.crumbs svg {
    margin-right: -4px;
}

.crumbs .dim {
    color: #8a8a8a;
}

.crumbs em {
    font-style: normal;
    color: #8a8a8a;
}

.more {
    width: 36px;
    background-color: #fff;
    border-left: 1px solid #d0d0d0;
}

.search {
    width: 35px;
    margin-left: 6px;
    justify-content: center;
}

.ch-spacer {
    flex: 1;
}

.view .ch-btn:first-child {
    width: 35px;
    border-right: 1px solid #d0d0d0;
}

.view .ch-btn:last-child {
    width: 24px;
}

.menu {
    width: 36px;
    margin: 0 2px 0 6px;
    justify-content: center;
}

.ch-wm {
    width: 24px;
    height: 24px;
    margin-left: 16px;
    display: flex;
    align-items: center;
    justify-content: center;
    border-radius: 50%;
    background-color: #dcdcdc;
}

.ch-body {
    flex: 1;
    display: flex;
    min-height: 0;
}

.places {
    width: 167px;
    flex: none;
    padding-top: 2px;
    background-color: #fafafa;
    border-right: 1px solid #d8d8d8;
    color: #2d2d2d;
}

.place {
    height: 38px;
    display: flex;
    align-items: center;
    gap: 8px;
    padding-left: 14px;
}

.place-sep {
    height: 1px;
    margin-top: 4px;
    background-color: #e0e0e0;
}

.other {
    margin-top: 4px;
}

.files {
    flex: 1;
    position: relative;
    padding: 10px 0 0 34px;
    color: #2d2d2d;
}

.file {
    width: 96px;
    text-align: center;
    font-size: 14.500px;
}

.thumb {
    display: block;
    margin: 0 auto 4px;
}

.file-name {
    line-height: 17px;
}
```
